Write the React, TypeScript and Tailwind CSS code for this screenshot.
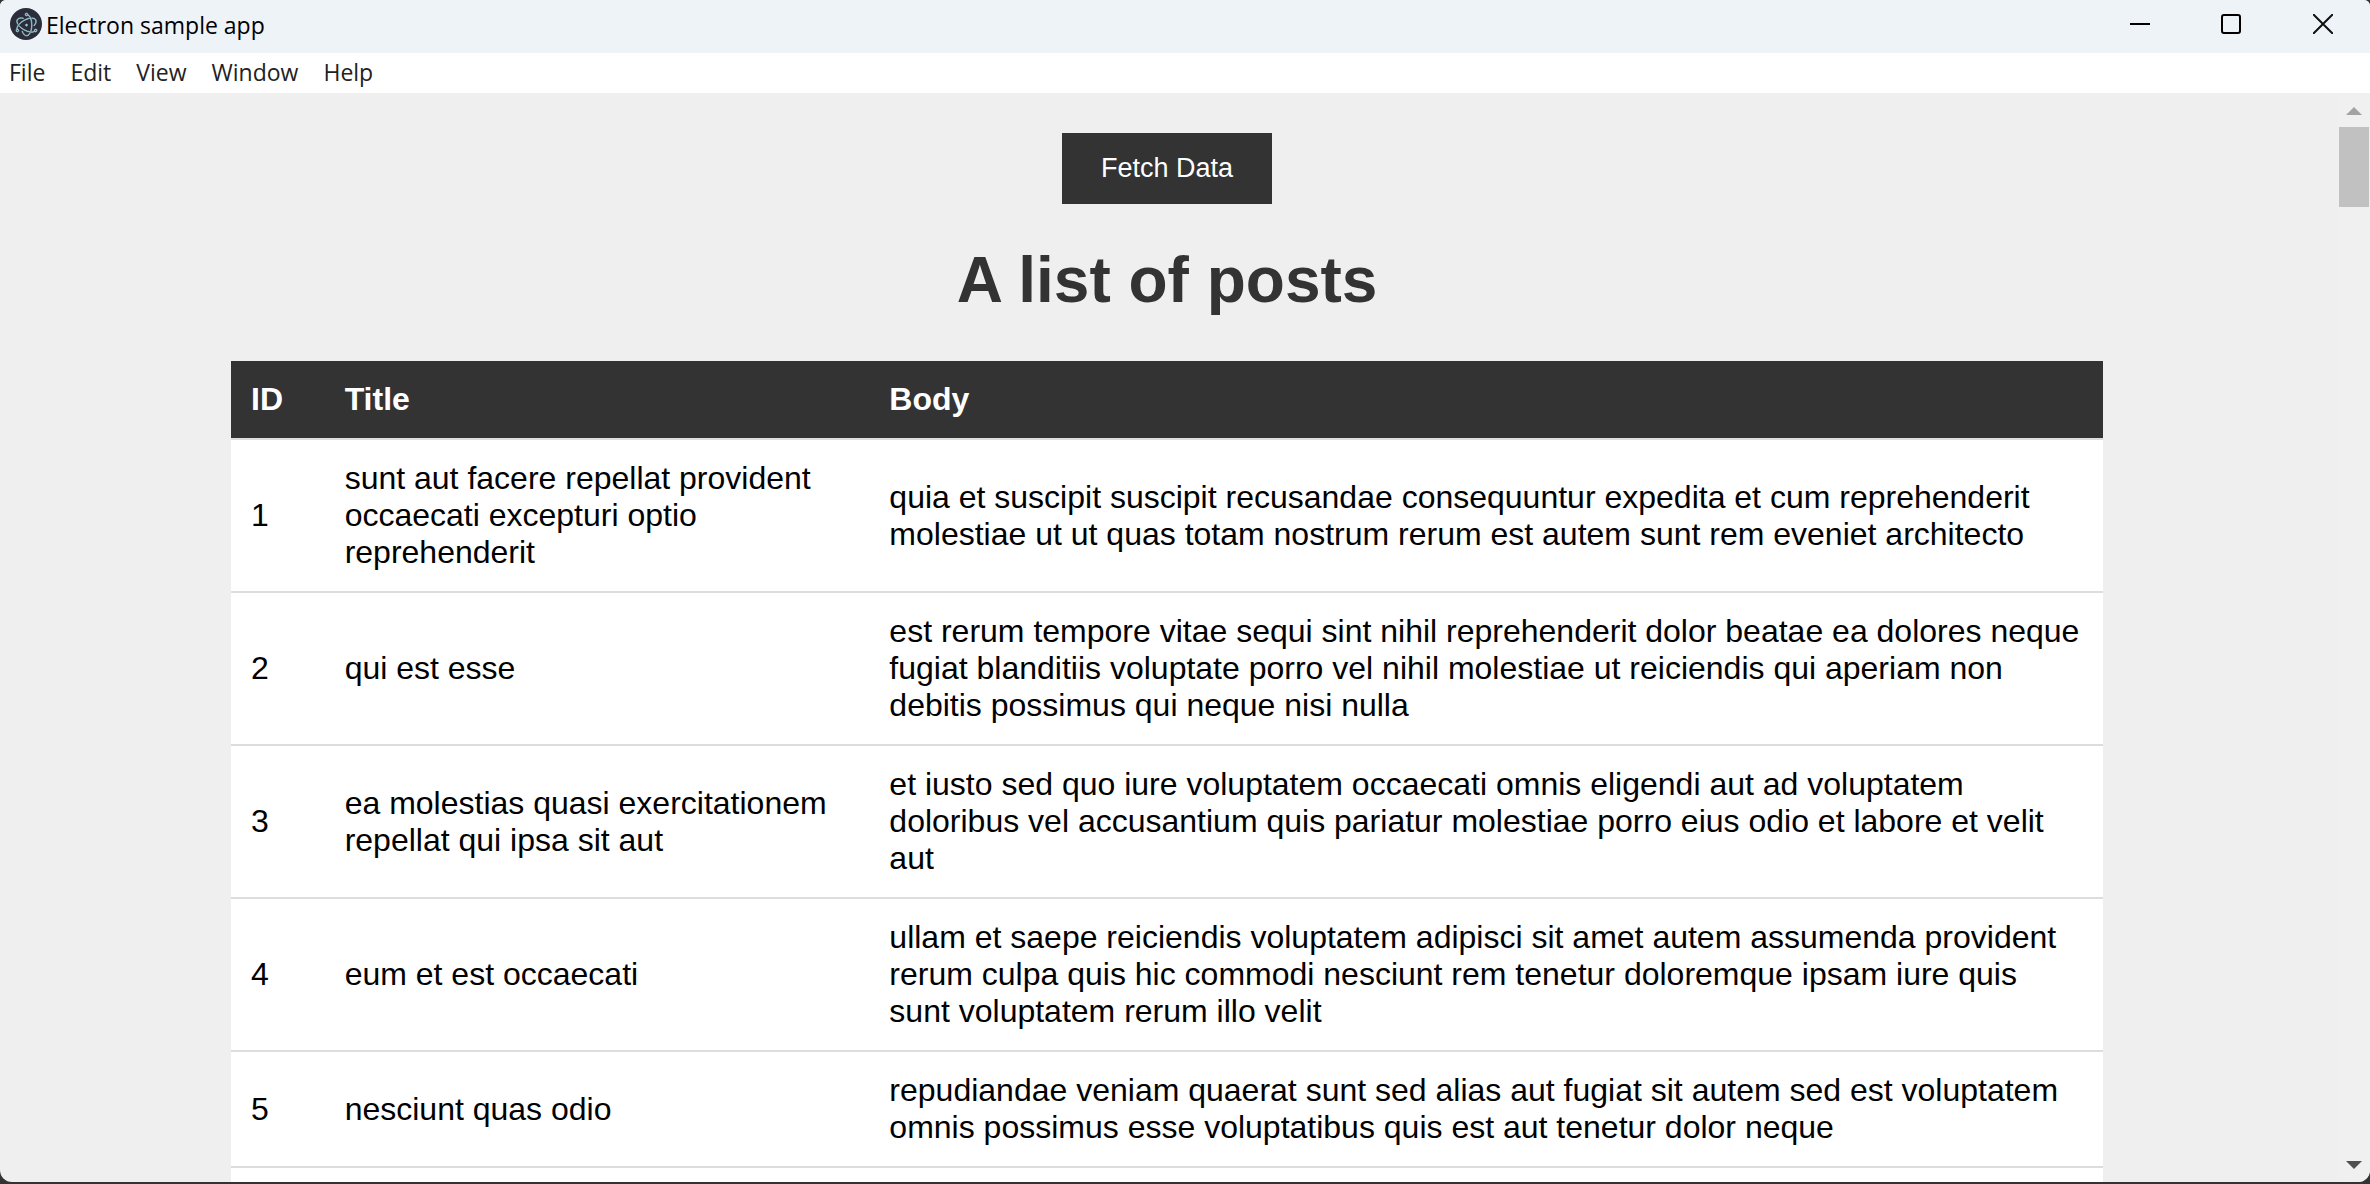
import { SiElectron } from "react-icons/si";

const MENUS = ["File", "Edit", "View", "Window", "Help"];

const POSTS = [
  {
    id: 1,
    title:
      "sunt aut facere repellat provident occaecati excepturi optio reprehenderit",
    body: "quia et suscipit suscipit recusandae consequuntur expedita et cum reprehenderit molestiae ut ut quas totam nostrum rerum est autem sunt rem eveniet architecto",
  },
  {
    id: 2,
    title: "qui est esse",
    body: "est rerum tempore vitae sequi sint nihil reprehenderit dolor beatae ea dolores neque fugiat blanditiis voluptate porro vel nihil molestiae ut reiciendis qui aperiam non debitis possimus qui neque nisi nulla",
  },
  {
    id: 3,
    title: "ea molestias quasi exercitationem repellat qui ipsa sit aut",
    body: "et iusto sed quo iure voluptatem occaecati omnis eligendi aut ad voluptatem doloribus vel accusantium quis pariatur molestiae porro eius odio et labore et velit aut",
  },
  {
    id: 4,
    title: "eum et est occaecati",
    body: "ullam et saepe reiciendis voluptatem adipisci sit amet autem assumenda provident rerum culpa quis hic commodi nesciunt rem tenetur doloremque ipsam iure quis sunt voluptatem rerum illo velit",
  },
  {
    id: 5,
    title: "nesciunt quas odio",
    body: "repudiandae veniam quaerat sunt sed alias aut fugiat sit autem sed est voluptatem omnis possimus esse voluptatibus quis est aut tenetur dolor neque",
  },
];

function TitleBar() {
  return (
    <header className="flex h-[53px] shrink-0 items-start justify-between bg-[#eef3f8]">
      <div className="flex h-12 items-center gap-1 pl-[10px]">
        <span className="flex size-8 items-center justify-center rounded-full bg-[#2b2e3a]">
          <SiElectron
            className="size-[23px] overflow-visible text-[#9fd0d8]"
            strokeWidth={0.6}
          />
        </span>
        <span className="pt-0.5 text-[23px] leading-8 text-black">
          Electron sample app
        </span>
      </div>
      <div className="flex h-12">
        <button
          type="button"
          aria-label="Minimize"
          className="flex w-[91px] items-center justify-center"
        >
          <svg width="20" height="20" viewBox="0 0 20 20">
            <path d="M0 10h20" stroke="#000" strokeWidth="2" />
          </svg>
        </button>
        <button
          type="button"
          aria-label="Maximize"
          className="flex w-[91px] items-center justify-center"
        >
          <svg width="20" height="20" viewBox="0 0 20 20" fill="none">
            <rect
              x="1"
              y="1"
              width="18"
              height="18"
              rx="2"
              stroke="#000"
              strokeWidth="2"
            />
          </svg>
        </button>
        <button
          type="button"
          aria-label="Close"
          className="flex w-[94px] items-center justify-center"
        >
          <svg width="20" height="20" viewBox="0 0 20 20">
            <path d="M0 0l20 20M20 0L0 20" stroke="#111" strokeWidth="2" />
          </svg>
        </button>
      </div>
    </header>
  );
}

function MenuBar() {
  return (
    <nav className="flex h-10 shrink-0 items-center gap-[25px] bg-white pl-[9px]">
      {MENUS.map((menu) => (
        <button
          key={menu}
          type="button"
          className="pb-0.5 text-[23px] leading-8 text-[#222]"
        >
          {menu}
        </button>
      ))}
    </nav>
  );
}

function ScrollBar() {
  return (
    <div
      className="flex w-[33px] shrink-0 flex-col items-center justify-between bg-[#f0f0f0] pt-[14px] pb-[13px]"
      aria-hidden="true"
    >
      <div className="flex w-full flex-col items-end gap-3 pr-px">
        <svg width="16" height="8" viewBox="0 0 16 8" className="mr-[7px]">
          <path d="M8 0l8 8H0z" fill="#a3a3a3" />
        </svg>
        <div className="h-20 w-[30px] bg-[#c1c1c1]" />
      </div>
      <svg width="16" height="8" viewBox="0 0 16 8">
        <path d="M0 0h16L8 8z" fill="#505050" />
      </svg>
    </div>
  );
}

function PostsTable() {
  return (
    <table className="mx-auto w-[80.2%] table-fixed bg-white text-left text-[32px] leading-[37px] text-black">
      <colgroup>
        <col className="w-[5%]" />
        <col className="w-[29.1%]" />
        <col />
      </colgroup>
      <thead className="bg-[#333] text-white">
        <tr className="border-b-2 border-[#ddd]">
          <th className="p-5 font-bold">ID</th>
          <th className="p-5 font-bold">Title</th>
          <th className="p-5 font-bold">Body</th>
        </tr>
      </thead>
      <tbody>
        {POSTS.map((post) => (
          <tr key={post.id} className="border-b-2 border-[#ddd]">
            <td className="p-5">{post.id}</td>
            <td className="p-5">{post.title}</td>
            <td className="p-5">{post.body}</td>
          </tr>
        ))}
        <tr>
          <td className="p-5" colSpan={3} />
        </tr>
      </tbody>
    </table>
  );
}

export default function App() {
  return (
    <div className="h-screen bg-[#333] pb-0.5 font-['Open_Sans','Noto_Sans',sans-serif]">
      <div className="flex h-full flex-col overflow-hidden rounded-t-md rounded-b-xl bg-[#efefef]">
        <TitleBar />
        <MenuBar />
        <div className="flex min-h-0 flex-1">
          <main className="min-w-0 flex-1 overflow-hidden pt-10 pr-[3px] font-['Liberation_Sans',Arial,sans-serif]">
            <button
              type="button"
              className="mx-auto block bg-[#333] px-[39px] py-5 text-[27px] leading-[31px] text-white"
            >
              Fetch Data
            </button>
            <h1 className="mt-10 mb-11 text-center text-[64px] leading-[73px] font-bold text-[#333]">
              A list of posts
            </h1>
            <PostsTable />
          </main>
          <ScrollBar />
        </div>
      </div>
    </div>
  );
}
